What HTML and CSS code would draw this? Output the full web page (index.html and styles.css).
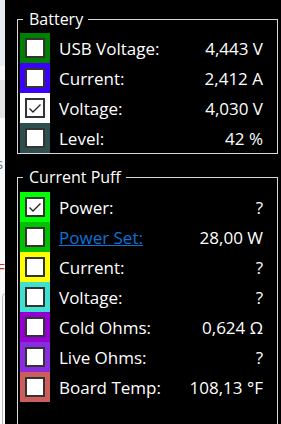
FILE: index.html
```html
<!DOCTYPE html>
<html lang="en">
<head>
    <meta charset="UTF-8">
    <title>Monitor</title>
    <link rel="stylesheet" href="styles.css">
</head>
<body>

<div class="window">
    <div class="behind">
        <span class="behind-s">s</span>
        <span class="behind-f">F</span>
        <div class="behind-box"></div>
    </div>

    <div class="panel">
        <fieldset class="group">
            <legend>Battery</legend>
            <div class="row">
                <span class="swatch" style="background:#008000"><span class="check"></span></span>
                <span class="label">USB Voltage:</span>
                <span class="value">4,443 V</span>
            </div>
            <div class="row">
                <span class="swatch" style="background:#3c00ff"><span class="check"></span></span>
                <span class="label">Current:</span>
                <span class="value">2,412 A</span>
            </div>
            <div class="row">
                <span class="swatch" style="background:#ffffff"><span class="check"><svg viewBox="0 0 16 16"><polyline points="2.5,8.5 6,12 13.5,4.5"/></svg></span></span>
                <span class="label">Voltage:</span>
                <span class="value">4,030 V</span>
            </div>
            <div class="row">
                <span class="swatch" style="background:#2f4f4f"><span class="check"></span></span>
                <span class="label">Level:</span>
                <span class="value">42 %</span>
            </div>
        </fieldset>

        <fieldset class="group puff">
            <legend>Current Puff</legend>
            <div class="row">
                <span class="swatch" style="background:#00ff00"><span class="check"><svg viewBox="0 0 16 16"><polyline points="2.5,8.5 6,12 13.5,4.5"/></svg></span></span>
                <span class="label">Power:</span>
                <span class="value">?</span>
            </div>
            <div class="row">
                <span class="swatch" style="background:#00c000"><span class="check"></span></span>
                <a class="label link" href="#">Power Set:</a>
                <span class="value">28,00 W</span>
            </div>
            <div class="row">
                <span class="swatch" style="background:#ffff00"><span class="check"></span></span>
                <span class="label">Current:</span>
                <span class="value">?</span>
            </div>
            <div class="row">
                <span class="swatch" style="background:#40e0d0"><span class="check"></span></span>
                <span class="label">Voltage:</span>
                <span class="value">?</span>
            </div>
            <div class="row">
                <span class="swatch" style="background:#9400d3"><span class="check"></span></span>
                <span class="label">Cold Ohms:</span>
                <span class="value">0,624 &#937;</span>
            </div>
            <div class="row">
                <span class="swatch" style="background:#8a2be2"><span class="check"></span></span>
                <span class="label">Live Ohms:</span>
                <span class="value">?</span>
            </div>
            <div class="row">
                <span class="swatch" style="background:#cd5c5c"><span class="check"></span></span>
                <span class="label">Board Temp:</span>
                <span class="value">108,13 &deg;F</span>
            </div>
        </fieldset>
    </div>
</div>

</body>
</html>
```

FILE: styles.css
```css
html, body {
    margin: 0;
    padding: 0;
    background: #000;
}
body {
    font-family: "Open Sans", "Noto Sans", sans-serif;
    font-size: 17px;
    color: #fff;
    overflow: hidden;
}
.window {
    display: flex;
    width: 281px;
    height: 424px;
}
.behind {
    width: 5px;
    flex: none;
    position: relative;
    background: linear-gradient(to bottom,
        #e6ebf1 0, #e6ebf1 66px,
        #f7f7f7 66px, #f7f7f7 80px,
        #e4e4e4 80px, #e4e4e4 118px,
        #f9f9f9 118px);
    overflow: hidden;
}
.behind-s {
    position: absolute;
    left: -4px;
    top: 153px;
    font-size: 15px;
    color: #6b7a8c;
}
.behind-f {
    position: absolute;
    left: -3px;
    top: 258px;
    font-size: 15px;
    color: #c0392b;
}
.behind-box {
    position: absolute;
    left: 2px;
    top: 293px;
    width: 10px;
    height: 200px;
    border: 1px solid #b8b8b8;
    border-radius: 4px;
}
.panel {
    flex: 1;
    padding: 9px 3px 0 12px;
}
.group {
    margin: 0;
    padding: 4px 0 0 2px;
    border: 1px solid #d8d8d8;
    min-width: 0;
}
.group legend {
    margin-left: 3px;
    padding: 0 5px 0 6px;
    font-size: 16px;
    line-height: 20px;
}
.puff {
    margin-top: 13px;
    padding-top: 5px;
    height: 260px;
}
.row {
    display: flex;
    align-items: center;
    height: 30px;
}
.swatch {
    width: 30px;
    height: 30px;
    flex: none;
    display: flex;
    align-items: center;
    justify-content: center;
}
.check {
    width: 16px;
    height: 16px;
    border: 2px solid #333;
    background: #fff;
    display: block;
}
.check svg {
    display: block;
    width: 16px;
    height: 16px;
}
.check polyline {
    fill: none;
    stroke: #222;
    stroke-width: 1.3;
}
.label {
    margin-left: 9px;
    flex: 1;
    white-space: nowrap;
}
.link {
    color: #0a74da;
    text-decoration: underline;
}
.value {
    margin-right: 14px;
    text-align: right;
    white-space: nowrap;
}
```
